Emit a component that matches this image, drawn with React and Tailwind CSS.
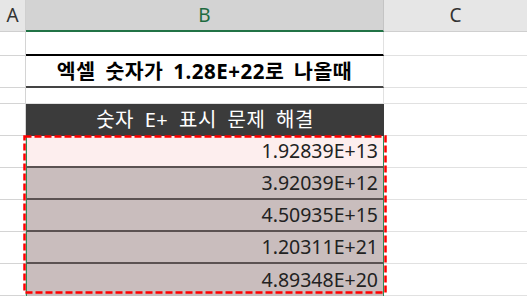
const font = "font-['Noto_Sans','Noto_Sans_CJK_KR',sans-serif]";

const values = ["1.92839E+13", "3.92039E+12", "4.50935E+15", "1.20311E+21", "4.89348E+20"];

const Row = ({ h, children }) => (
  <div className="flex" style={{ height: h }}>
    <div className="w-[26px] shrink-0 border-r border-b border-[#d4d4d4] bg-white" />
    {children}
    <div className="flex-1 border-b border-[#e1e1e1] bg-white" />
  </div>
);

export default function App() {
  return (
    <div className={`relative w-[527px] h-[300px] overflow-hidden bg-white ${font}`}>
      {/* column headers */}
      <div className="flex h-[32px] text-[19px]">
        <div className="w-[26px] shrink-0 flex items-center justify-center bg-[#e6e6e6] border-r border-b border-[#cfcfcf] text-[#333]">
          A
        </div>
        <div className="w-[358px] shrink-0 flex items-center justify-center bg-[#d3d3d3] border-r border-[#c4c4c4] border-b-2 border-b-[#217346] text-[#1e6b3f]">
          B
        </div>
        <div className="flex-1 flex items-center justify-center bg-[#e6e6e6] border-b border-[#cfcfcf] text-[#333]">
          C
        </div>
      </div>

      <Row h={24}>
        <div className="w-[358px] shrink-0 bg-white border-r border-[#e1e1e1] border-b-2 border-b-black" />
      </Row>

      <Row h={32}>
        <div className="w-[358px] shrink-0 flex items-center justify-center bg-white border-r border-[#e1e1e1] border-b-2 border-b-[#444] text-[20.5px] font-bold text-black tracking-[0.5px] [word-spacing:4px]">
          엑셀 숫자가 1.28E+22로 나올때
        </div>
      </Row>

      <Row h={16}>
        <div className="w-[358px] shrink-0 bg-white border-r border-b border-[#e1e1e1]" />
      </Row>

      <Row h={32}>
        <div className="w-[358px] shrink-0 flex items-center justify-center bg-[#3b3b3b] text-[20px] text-white tracking-[0.5px] [word-spacing:5px]">
          숫자 E+ 표시 문제 해결
        </div>
      </Row>

      {values.map((v, i) => (
        <Row key={v} h={32}>
          <div
            className={`w-[358px] shrink-0 flex items-center justify-end pr-[5px] text-[19.5px] text-[#222] border-l border-r border-[#2f8a57] ${
              i === 0 ? "bg-[#fdeeee]" : "bg-[#c9bdbd]"
            } ${i < values.length - 1 ? "border-b-2 border-b-[#5b5252]" : ""}`}
          >
            {v}
          </div>
        </Row>
      ))}

      {/* copy marquee */}
      <svg className="absolute left-[23px] top-[135px] pointer-events-none" width="364" height="160">
        <rect x="1.5" y="1.5" width="361" height="156" fill="none" stroke="#ff0000" strokeWidth="2.5" strokeDasharray="7 3" />
      </svg>
    </div>
  );
}
